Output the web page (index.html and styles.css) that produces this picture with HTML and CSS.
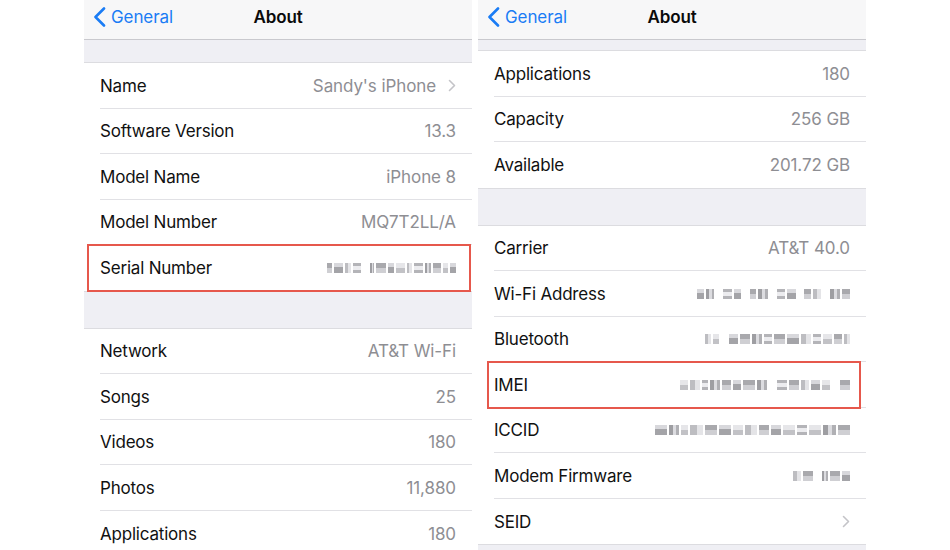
FILE: index.html
```html
<!DOCTYPE html>
<html>
<head>
<meta charset="utf-8">
<link rel="stylesheet" href="styles.css">
</head>
<body>
<div class="page">
  <section class="screen">
    <header class="nav">
      <div class="back">
        <svg class="back-icon" width="13" height="20" viewBox="0 0 13 20"><path d="M11 1.5 L2.5 10 L11 18.5" fill="none" stroke="#1a7cf5" stroke-width="2.6" stroke-linecap="round" stroke-linejoin="round"/></svg>
        <span>General</span>
      </div>
      <div class="title">About</div>
    </header>
    <div class="gap gap-top"></div>
    <div class="group">
      <div class="row"><div class="cell"><span class="label">Name</span><span class="value">Sandy's iPhone<svg class="chev" width="8" height="13" viewBox="0 0 8 13"><path d="M1.5 1.5 L6.5 6.5 L1.5 11.5" fill="none" stroke="#c4c4c8" stroke-width="1.6" stroke-linecap="round" stroke-linejoin="round"/></svg></span></div></div>
      <div class="row"><div class="cell"><span class="label">Software Version</span><span class="value">13.3</span></div></div>
      <div class="row"><div class="cell"><span class="label">Model Name</span><span class="value">iPhone 8</span></div></div>
      <div class="row"><div class="cell"><span class="label">Model Number</span><span class="value">MQ7T2LL/A</span></div></div>
      <div class="row hl hl-left"><div class="cell"><span class="label">Serial Number</span>
        <span class="mosaic mz-serial">
          <i class="m a w3"></i><i class="m b w6"></i><i class="m c w4"></i><i class="m t w5"></i><i class="sp"></i><i class="m d w3"></i><i class="m a w6"></i><i class="m b w4"></i><i class="m e w6"></i><i class="m c w3"></i><i class="m t w6"></i><i class="m d w4"></i><i class="m a w5"></i><i class="m e w3"></i><i class="m b w4"></i>
        </span></div></div>
    </div>
    <div class="gap gap-mid"></div>
    <div class="group">
      <div class="row"><div class="cell"><span class="label">Network</span><span class="value">AT&amp;T Wi-Fi</span></div></div>
      <div class="row"><div class="cell"><span class="label">Songs</span><span class="value">25</span></div></div>
      <div class="row"><div class="cell"><span class="label">Videos</span><span class="value">180</span></div></div>
      <div class="row"><div class="cell"><span class="label">Photos</span><span class="value">11,880</span></div></div>
      <div class="row"><div class="cell"><span class="label">Applications</span><span class="value">180</span></div></div>
    </div>
  </section>

  <section class="screen">
    <header class="nav">
      <div class="back">
        <svg class="back-icon" width="13" height="20" viewBox="0 0 13 20"><path d="M11 1.5 L2.5 10 L11 18.5" fill="none" stroke="#1a7cf5" stroke-width="2.6" stroke-linecap="round" stroke-linejoin="round"/></svg>
        <span>General</span>
      </div>
      <div class="title">About</div>
    </header>
    <div class="gap gap-scroll"></div>
    <div class="group">
      <div class="row"><div class="cell"><span class="label">Applications</span><span class="value">180</span></div></div>
      <div class="row"><div class="cell"><span class="label">Capacity</span><span class="value">256 GB</span></div></div>
      <div class="row"><div class="cell"><span class="label">Available</span><span class="value">201.72 GB</span></div></div>
    </div>
    <div class="gap gap-mid"></div>
    <div class="group">
      <div class="row"><div class="cell"><span class="label">Carrier</span><span class="value">AT&amp;T 40.0</span></div></div>
      <div class="row"><div class="cell"><span class="label">Wi-Fi Address</span>
        <span class="mosaic mz-wifi">
          <i class="m b w4"></i><i class="m d w5"></i><i class="sp"></i><i class="m t w6"></i><i class="m b w4"></i><i class="sp"></i><i class="m a w4"></i><i class="m d w6"></i><i class="sp"></i><i class="m t w5"></i><i class="m b w5"></i><i class="sp"></i><i class="m a w4"></i><i class="m c w5"></i><i class="sp"></i><i class="m d w6"></i><i class="m a w5"></i>
        </span></div></div>
      <div class="row"><div class="cell"><span class="label">Bluetooth</span>
        <span class="mosaic mz-bt">
          <i class="m c w3"></i><i class="m e w3"></i><i class="sp"></i><i class="m b w4"></i><i class="m a w5"></i><i class="m d w5"></i><i class="m t w4"></i><i class="m a w5"></i><i class="m b w6"></i><i class="m c w5"></i><i class="m t w4"></i><i class="m e w4"></i><i class="m a w4"></i><i class="m c w3"></i>
        </span></div></div>
      <div class="row hl hl-right"><div class="cell"><span class="label">IMEI</span>
        <span class="mosaic mz-imei">
          <i class="m e w4"></i><i class="m c w5"></i><i class="m t w3"></i><i class="m d w5"></i><i class="m a w5"></i><i class="m b w4"></i><i class="m a w6"></i><i class="m d w5"></i><i class="sp"></i><i class="m t w5"></i><i class="m a w5"></i><i class="m c w4"></i><i class="m b w5"></i><i class="m e w4"></i><i class="sp"></i><i class="m a w5"></i>
        </span></div></div>
      <div class="row"><div class="cell"><span class="label">ICCID</span>
        <span class="mosaic mz-iccid">
          <i class="m b w5"></i><i class="m d w4"></i><i class="m e w3"></i><i class="m c w5"></i><i class="m a w5"></i><i class="m b w5"></i><i class="m e w4"></i><i class="m c w5"></i><i class="m a w4"></i><i class="m b w4"></i><i class="m e w5"></i><i class="m t w4"></i><i class="m e w5"></i><i class="m d w5"></i><i class="m a w5"></i>
        </span></div></div>
      <div class="row"><div class="cell"><span class="label">Modem Firmware</span>
        <span class="mosaic mz-modem">
          <i class="m c w5"></i><i class="m a w6"></i><i class="sp"></i><i class="m d w4"></i><i class="m a w6"></i><i class="m b w5"></i>
        </span></div></div>
      <div class="row"><div class="cell"><span class="label">SEID</span><span class="value"><svg class="chev" width="8" height="13" viewBox="0 0 8 13"><path d="M1.5 1.5 L6.5 6.5 L1.5 11.5" fill="none" stroke="#c4c4c8" stroke-width="1.6" stroke-linecap="round" stroke-linejoin="round"/></svg></span></div></div>
    </div>
  </section>
</div>
</body>
</html>
```

FILE: styles.css
```css
* { box-sizing: border-box; }

html, body {
  margin: 0;
  padding: 0;
  background: #ffffff;
}

body {
  font-family: Inter, "Noto Sans", "Liberation Sans", sans-serif;
  font-size: 17px;
  color: #111111;
  -webkit-font-smoothing: antialiased;
}

.page {
  display: flex;
  justify-content: center;
  gap: 6px;
  width: 950px;
  height: 550px;
  overflow: hidden;
}

.screen {
  width: 388px;
  height: 550px;
  background: #efeff4;
  display: flex;
  flex-direction: column;
  overflow: hidden;
  flex-shrink: 0;
}

.nav {
  position: relative;
  height: 40px;
  flex-shrink: 0;
  background: #f7f7f8;
  border-bottom: 1px solid #c9c9ce;
  display: flex;
  align-items: center;
  justify-content: center;
  padding-bottom: 6px;
}

.back {
  position: absolute;
  left: 9px;
  top: 7px;
  display: flex;
  align-items: center;
  gap: 5px;
  color: #1a7cf5;
  font-size: 17px;
  letter-spacing: -0.1px;
}

.back-icon { display: block; }

.title {
  font-weight: 600;
  font-size: 17px;
  letter-spacing: -0.1px;
  color: #0a0a0a;
}

.gap { flex-shrink: 0; }
.gap-top { height: 22px; }
.gap-mid { height: 36px; }
.gap-scroll { height: 10px; }

.group {
  background: #ffffff;
  border-top: 1px solid #dcdce0;
  border-bottom: 1px solid #dcdce0;
  flex-shrink: 0;
}

.row {
  position: relative;
  height: 45.5px;
  padding-left: 16px;
}

.cell {
  height: 100%;
  display: flex;
  align-items: center;
  justify-content: space-between;
  padding-right: 16px;
  border-bottom: 1px solid #e1e1e5;
  padding-top: 1px;
}

.row:last-child .cell { border-bottom: none; }

.label {
  letter-spacing: -0.2px;
  color: #111111;
}

.value {
  color: #8e8e93;
  letter-spacing: -0.1px;
  display: flex;
  align-items: center;
  gap: 12px;
}

.chev { display: block; }

.hl::after {
  content: "";
  position: absolute;
  top: -1px;
  bottom: -1px;
  border: 2px solid #e6584c;
  pointer-events: none;
}
.hl-left::after { left: 3px; right: 1px; }
.hl-right::after { left: 9px; right: 5px; }

.mosaic {
  display: flex;
  align-items: center;
  gap: 2px;
  height: 11px;
}
.mz-serial { width: 129px; }
.mz-wifi { width: 153px; }
.mz-bt { width: 145px; }
.mz-imei { width: 170px; }
.mz-iccid { width: 195px; }
.mz-modem { width: 57px; }

.m {
  display: block;
  height: 10px;
  flex-basis: 0;
}
.m.a { background: linear-gradient(#a9a9ad 0 50%, #cfcfd3 50%); }
.m.b { background: linear-gradient(#d8d8dc 0 40%, #a4a4a8 40%); }
.m.c { background: linear-gradient(90deg, #bdbdc1 0 50%, #e4e4e7 50%); }
.m.d { background: linear-gradient(90deg, #9e9ea2 0 40%, #dcdce0 40% 70%, #b0b0b4 70%); }
.m.e { background: linear-gradient(#e6e6e9 0 50%, #c2c2c6 50%); }
.m.t { background: linear-gradient(#b4b4b8 0 30%, #ececef 30% 70%, #b4b4b8 70%); }
.w3 { flex-grow: 3; }
.w4 { flex-grow: 4; }
.w5 { flex-grow: 5; }
.w6 { flex-grow: 6; }
.sp { display: block; flex: 3 1 0; }
```
